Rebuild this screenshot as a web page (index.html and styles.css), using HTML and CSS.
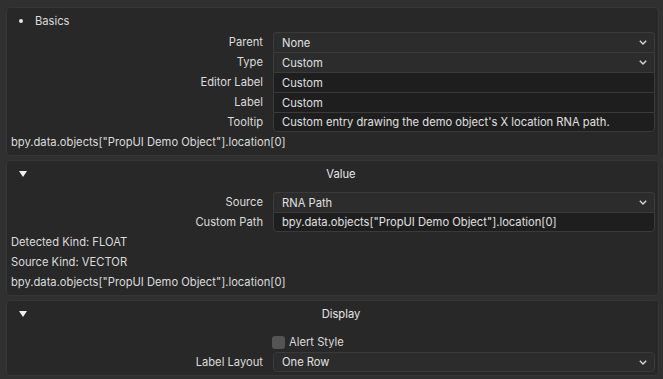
FILE: index.html
```html
<!DOCTYPE html>
<html>
<head>
<meta charset="utf-8">
<link rel="stylesheet" href="styles.css">
</head>
<body>
<div class="root">
  <section class="panel">
    <div class="sub-header">
      <span class="bullet"></span>
      <span class="sub-title">Basics</span>
    </div>
    <div class="props">
      <div class="label">Parent</div>
      <div class="field dropdown first"><span>None</span><svg class="chev" width="8" height="5" viewBox="0 0 8 5"><polyline points="0.8,0.8 4,4 7.2,0.8" fill="none" stroke="#d8d8d8" stroke-width="1.4"/></svg></div>
      <div class="label">Type</div>
      <div class="field dropdown"><span>Custom</span><svg class="chev" width="8" height="5" viewBox="0 0 8 5"><polyline points="0.8,0.8 4,4 7.2,0.8" fill="none" stroke="#d8d8d8" stroke-width="1.4"/></svg></div>
      <div class="label">Editor Label</div>
      <div class="field text"><span>Custom</span></div>
      <div class="label">Label</div>
      <div class="field text"><span>Custom</span></div>
      <div class="label">Tooltip</div>
      <div class="field text last"><span>Custom entry drawing the demo object's X location RNA path.</span></div>
    </div>
    <div class="line">bpy.data.objects["PropUI Demo Object"].location[0]</div>
  </section>

  <section class="panel">
    <div class="header">
      <svg class="tri" width="8" height="6" viewBox="0 0 8 6"><polygon points="0,0 8,0 4,6" fill="#f0f0f0"/></svg>
      <span class="title">Value</span>
    </div>
    <div class="props">
      <div class="label">Source</div>
      <div class="field dropdown first"><span>RNA Path</span><svg class="chev" width="8" height="5" viewBox="0 0 8 5"><polyline points="0.8,0.8 4,4 7.2,0.8" fill="none" stroke="#d8d8d8" stroke-width="1.4"/></svg></div>
      <div class="label">Custom Path</div>
      <div class="field text last"><span>bpy.data.objects["PropUI Demo Object"].location[0]</span></div>
    </div>
    <div class="line">Detected Kind: FLOAT</div>
    <div class="line">Source Kind: VECTOR</div>
    <div class="line">bpy.data.objects["PropUI Demo Object"].location[0]</div>
  </section>

  <section class="panel">
    <div class="header">
      <svg class="tri" width="8" height="6" viewBox="0 0 8 6"><polygon points="0,0 8,0 4,6" fill="#f0f0f0"/></svg>
      <span class="title">Display</span>
    </div>
    <div class="props">
      <div class="label"></div>
      <div class="check-row"><span class="checkbox"></span><span>Alert Style</span></div>
      <div class="label">Label Layout</div>
      <div class="field dropdown first last"><span>One Row</span><svg class="chev" width="8" height="5" viewBox="0 0 8 5"><polyline points="0.8,0.8 4,4 7.2,0.8" fill="none" stroke="#d8d8d8" stroke-width="1.4"/></svg></div>
    </div>
  </section>
</div>
</body>
</html>
```

FILE: styles.css
```css
* { box-sizing: border-box; }

html, body {
  margin: 0;
  padding: 0;
  background: #303030;
  height: 100%;
}

body {
  font-family: Inter, "Noto Sans", "DejaVu Sans", sans-serif;
  font-size: 11.2px;
  color: #dcdcdc;
  overflow: hidden;
}

.root {
  display: flex;
  flex-direction: column;
  gap: 4px;
  padding: 7px 4px 0 6px;
}

.panel {
  background: #282828;
  border: 1px solid #363636;
  border-radius: 4px;
  padding: 0 3px 3px 0;
}

.sub-header {
  height: 24px;
  padding-top: 2px;
  display: flex;
  align-items: center;
  padding-left: 12px;
}

.bullet {
  width: 4px;
  height: 4px;
  border-radius: 50%;
  background: #e6e6e6;
}

.sub-title {
  margin-left: 12px;
}

.header {
  height: 26px;
  margin-bottom: 5px;
  display: flex;
  align-items: center;
  position: relative;
  padding-left: 12px;
}

.tri {
  display: block;
}

.title {
  position: absolute;
  left: 20px;
  right: 0;
  text-align: center;
  color: #e6e6e6;
}

.props {
  display: grid;
  grid-template-columns: 256px 1fr;
  column-gap: 10px;
}

.label {
  height: 20px;
  line-height: 20px;
  text-align: right;
  color: #dcdcdc;
}

.field {
  height: 20px;
  display: flex;
  align-items: center;
  justify-content: space-between;
  padding: 0 7px 0 8px;
  border: 1px solid #3a3a3a;
  border-bottom: none;
  white-space: nowrap;
  color: #e0e0e0;
}

.field.first {
  border-top-left-radius: 4px;
  border-top-right-radius: 4px;
}

.field.last {
  border-bottom: 1px solid #3a3a3a;
  border-bottom-left-radius: 4px;
  border-bottom-right-radius: 4px;
}

.dropdown {
  background: #2c2c2c;
}

.text {
  background: #1e1e1e;
}

.chev {
  display: block;
  flex: none;
}

.line {
  height: 20px;
  line-height: 20px;
  padding-left: 4px;
  color: #dcdcdc;
  white-space: nowrap;
}

.check-row {
  height: 20px;
  display: flex;
  align-items: center;
  gap: 4px;
  margin-left: -1px;
}

.checkbox {
  width: 13px;
  height: 13px;
  border-radius: 3px;
  background: #545454;
}
```
